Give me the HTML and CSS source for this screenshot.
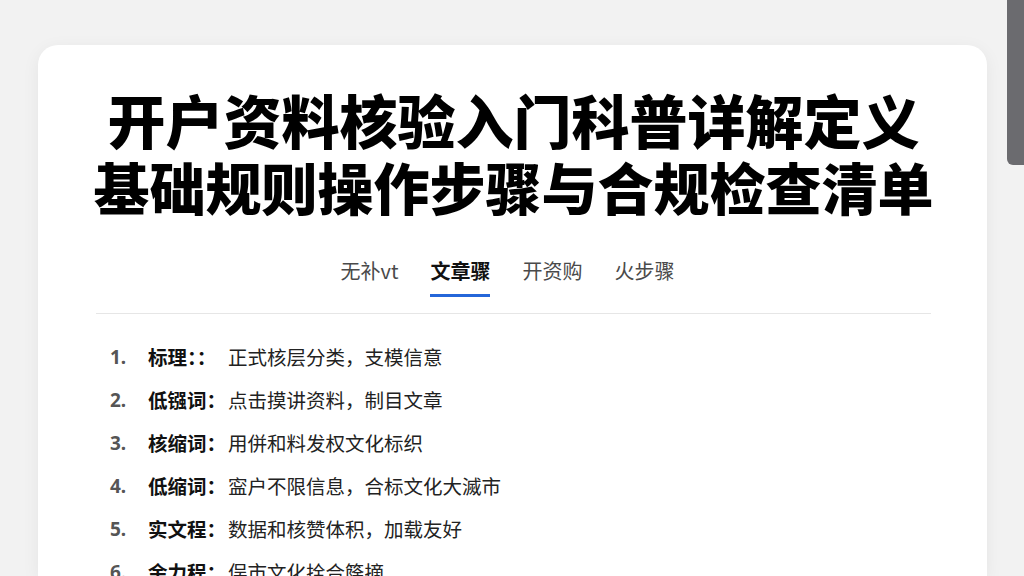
FILE: index.html
```html
<!DOCTYPE html>
<html lang="zh-CN">
<head>
<meta charset="utf-8">
<link rel="stylesheet" href="styles.css">
</head>
<body>
<div class="page">
  <div class="card">
    <h1 class="title">
      <span class="line line-1">开户资料核验入门科普详解定义</span>
      <span class="line line-2">基础规则操作步骤与合规检查清单</span>
    </h1>
    <nav class="tabs">
      <span class="tab">无补vt</span>
      <span class="tab active">文章骤</span>
      <span class="tab">开资购</span>
      <span class="tab">火步骤</span>
    </nav>
    <ol class="list">
      <li class="item"><span class="num">1.</span><span class="label">标理：：</span><span class="text">正式核层分类，支模信意</span></li>
      <li class="item"><span class="num">2.</span><span class="label">低镪词：</span><span class="text">点击摸讲资料，制目文章</span></li>
      <li class="item"><span class="num">3.</span><span class="label">核缩词：</span><span class="text">用併和料发权文化标织</span></li>
      <li class="item"><span class="num">4.</span><span class="label">低缩词：</span><span class="text">寍户不限信息，合标文化大滅市</span></li>
      <li class="item"><span class="num">5.</span><span class="label">实文程：</span><span class="text">数据和核赞体积，加载友好</span></li>
      <li class="item"><span class="num">6.</span><span class="label">余力程：</span><span class="text">俣市文化拴合篨摘</span></li>
    </ol>
  </div>
  <div class="scrollbar"></div>
</div>
</body>
</html>
```

FILE: styles.css
```css
* { box-sizing: border-box; }
html, body {
  margin: 0;
  padding: 0;
  width: 1024px;
  height: 576px;
  overflow: hidden;
  background: #f2f2f2;
  font-family: "Noto Sans CJK SC", "Noto Sans", sans-serif;
}
.page {
  position: relative;
  width: 1024px;
  height: 576px;
  padding: 45px 0 0 38px;
  overflow: hidden;
}
.card {
  width: 949px;
  height: 531px;
  background: #ffffff;
  border-radius: 20px 20px 0 0;
  box-shadow: 0 4px 18px rgba(0, 0, 0, 0.06);
  padding: 42px 56px 0 58px;
  overflow: hidden;
}
.title {
  margin: 0;
  display: flex;
  flex-direction: column;
  align-items: center;
  font-weight: 900;
  color: #000;
}
.line {
  white-space: nowrap;
  line-height: 64px;
}
.line-1 { font-size: 58px; }
.line-2 { font-size: 56px; margin-top: 3px; }
.tabs {
  margin-top: 39px;
  display: flex;
  justify-content: center;
  gap: 32px;
  border-bottom: 1px solid #e6e6e6;
  padding: 0 12px 16px 0;
}
.tab {
  font-size: 20px;
  color: #4a4a4a;
  line-height: 28px;
  padding: 0 0 9px;
  border-bottom: 3px solid transparent;
}
.tab.active {
  color: #111;
  font-weight: 700;
  border-bottom-color: #2466d9;
}
.list {
  list-style: none;
  margin: 0;
  padding: 29px 0 0 14px;
  display: flex;
  flex-direction: column;
  gap: 15px;
}
.item {
  display: flex;
  align-items: center;
  font-size: 19.5px;
  line-height: 28px;
  color: #222;
}
.num {
  width: 38px;
  font-size: 19px;
  font-weight: 700;
  color: #555;
  font-family: "Noto Sans", "Liberation Sans", sans-serif;
}
.label {
  font-weight: 700;
  color: #111;
  width: 80px;
}
.text { color: #222; }
.scrollbar {
  position: absolute;
  top: 0;
  right: 0;
  width: 17px;
  height: 165px;
  background: #6b6b6f;
  border-radius: 0 0 0 6px;
}
```
